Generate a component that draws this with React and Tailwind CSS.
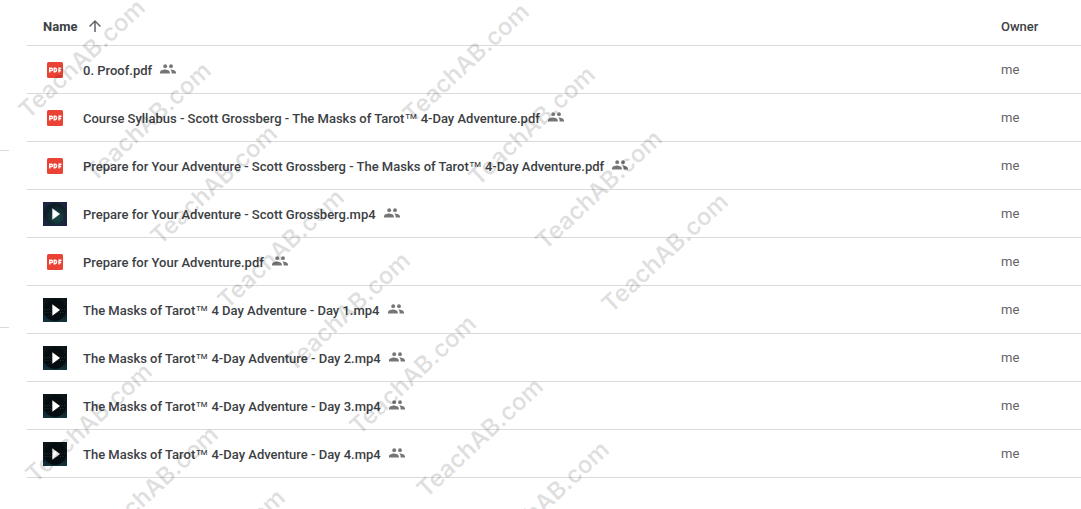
import React from 'react';
import { MdArrowUpward } from 'react-icons/md';

const files = [
  { name: '0. Proof.pdf', type: 'pdf' },
  { name: 'Course Syllabus - Scott Grossberg - The Masks of Tarot™ 4-Day Adventure.pdf', type: 'pdf' },
  { name: 'Prepare for Your Adventure - Scott Grossberg - The Masks of Tarot™ 4-Day Adventure.pdf', type: 'pdf' },
  { name: 'Prepare for Your Adventure - Scott Grossberg.mp4', type: 'intro' },
  { name: 'Prepare for Your Adventure.pdf', type: 'pdf' },
  { name: 'The Masks of Tarot™ 4 Day Adventure - Day 1.mp4', type: 'video' },
  { name: 'The Masks of Tarot™ 4-Day Adventure - Day 2.mp4', type: 'video' },
  { name: 'The Masks of Tarot™ 4-Day Adventure - Day 3.mp4', type: 'video' },
  { name: 'The Masks of Tarot™ 4-Day Adventure - Day 4.mp4', type: 'video' },
];

// Centre points of the repeated watermark
const marks = [
  [82, 59], [148, 122], [214, 185], [281, 249], [347, 312], [413, 375], [480, 438], [546, 501],
  [466, 63], [532, 126], [599, 190], [665, 253],
  [89, 423], [155, 486], [222, 549],
];

const PdfIcon = () => (
  <svg className="mx-1 h-4 w-4" viewBox="0 0 16 16" aria-hidden="true">
    <rect width="16" height="16" rx="1.5" fill="#ea4335" />
    <g fill="none" stroke="#fff" strokeWidth="1.4">
      <path d="M2.7 10.5V6.2H4.2a1.2 1.2 0 0 1 0 2.4H2.7" />
      <path d="M7.2 6.2h.8a1.5 1.5 0 0 1 1.5 1.5v.6a1.5 1.5 0 0 1-1.5 1.5h-.8z" />
      <path d="M12 10.5V6.2h2.5M12 8.5h2.2" />
    </g>
  </svg>
);

const VideoIcon = ({ intro }) => (
  <svg className="h-6 w-6" viewBox="0 0 24 24" aria-hidden="true">
    <defs>
      <radialGradient id="intro-glow" cx="60%" cy="65%" r="55%">
        <stop offset="0" stopColor="#1d4b4a" />
        <stop offset="1" stopColor="#0e1d26" />
      </radialGradient>
      <linearGradient id="video-shade" x2="0" y2="1">
        <stop offset="0" stopColor="#0c1316" />
        <stop offset="0.6" stopColor="#0a1a20" />
        <stop offset="1" stopColor="#14343e" />
      </linearGradient>
    </defs>
    <rect width="24" height="24" fill={intro ? '#1c2440' : 'url(#video-shade)'} />
    <circle cx="12" cy="12" r="11" fill={intro ? 'url(#intro-glow)' : '#060d10'} />
    {!intro && <path d="M1 11.5h22M2 14.5h20" stroke="#3a464b" strokeWidth="0.6" strokeDasharray="1 1.5" />}
    <path d="M9.3 6.3v11.4L17 12z" fill="#fff" />
  </svg>
);

const SharedIcon = () => (
  <svg className="mb-0.5 ml-2 h-4 w-4 shrink-0" viewBox="0 0 16 16" fill="#757575" role="img" aria-label="Shared">
    <circle cx="5.2" cy="5.2" r="1.9" />
    <circle cx="11" cy="5.2" r="1.9" />
    <path d="M0 12.6v-1.2C0 9.4 3.2 8.5 4.9 8.5s4.9.9 4.9 2.9v1.2z" />
    <path d="M10.3 8.5c2.3-.1 5.7.9 5.7 2.9v1.2h-4.4v-1.2c0-1.2-.5-2.2-1.3-2.9z" />
  </svg>
);

const FileName = ({ name }) => {
  const [before, after] = name.split('™');
  return (
    <a href="#" className="mt-0.5 ml-4 font-medium whitespace-nowrap">
      {before}
      {after && <span className="font-['Liberation_Sans',sans-serif] leading-none font-normal">™</span>}
      {after}
    </a>
  );
};

const App = () => {
  return (
    <div className="relative flex overflow-hidden bg-white pb-8 font-['Roboto',sans-serif]">
      {/* Edge of the side navigation */}
      <div className="w-[27px] shrink-0 pt-[150px]">
        <hr className="w-[9px] border-[#dadada]" />
        <hr className="mt-[176px] w-[9px] border-[#dadada]" />
      </div>

      {/* File list */}
      <table className="flex-1 table-fixed border-collapse text-left text-[13px] text-[#3c4043]">
        <thead>
          <tr className="h-[45px] border-b border-[#dadada]">
            <th scope="col" className="pt-2 pl-4 font-bold">
              <button type="button" className="flex items-center gap-[9px]">
                Name
                <MdArrowUpward className="h-[18px] w-[18px] text-[#5f6368]" />
              </button>
            </th>
            <th scope="col" className="w-20 pt-2 font-medium">Owner</th>
          </tr>
        </thead>
        <tbody>
          {files.map((file) => (
            <tr key={file.name} className="h-12 border-b border-[#dadada]">
              <td className="pt-0.5 pl-4">
                <div className="flex items-center">
                  {file.type === 'pdf' ? <PdfIcon /> : <VideoIcon intro={file.type === 'intro'} />}
                  <FileName name={file.name} />
                  <SharedIcon />
                </div>
              </td>
              <td className="pt-0.5 text-[#5f6368]">me</td>
            </tr>
          ))}
        </tbody>
      </table>

      {/* Watermark */}
      <div className="pointer-events-none absolute inset-0 overflow-hidden" aria-hidden="true">
        {marks.map(([x, y]) => (
          <span
            key={`${x}-${y}`}
            className="absolute -translate-x-1/2 -translate-y-1/2 -rotate-43 font-['Inter',sans-serif] text-[24px] leading-none font-semibold whitespace-nowrap text-black/13"
            style={{ left: x, top: y }}
          >
            TeachAB.com
          </span>
        ))}
      </div>
    </div>
  );
};

export default App;
